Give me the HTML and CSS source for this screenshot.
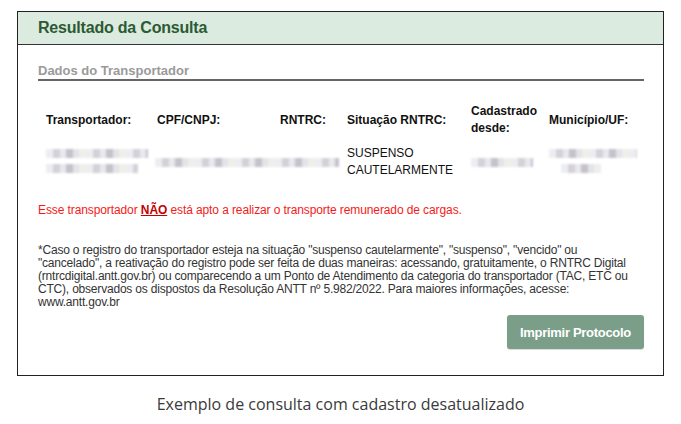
FILE: index.html
```html
<!DOCTYPE html>
<html lang="pt-BR">
<head>
    <meta charset="UTF-8">
    <title>Resultado da Consulta</title>
    <link rel="stylesheet" href="styles.css">
</head>
<body>
    <div class="figure">
        <div class="panel">
            <div class="panel-header">
                <h1>Resultado da Consulta</h1>
            </div>

            <div class="panel-body">
                <h2 class="section-title">Dados do Transportador</h2>

                <div class="data-table">
                    <div class="th">Transportador:</div>
                    <div class="th">CPF/CNPJ:</div>
                    <div class="th">RNTRC:</div>
                    <div class="th">Situação RNTRC:</div>
                    <div class="th">Cadastrado desde:</div>
                    <div class="th">Município/UF:</div>

                    <div class="td">
                        <span class="blur b1"></span>
                        <span class="blur b2"></span>
                    </div>
                    <div class="td span2">
                        <span class="blur b3"></span>
                    </div>
                    <div class="td">SUSPENSO CAUTELARMENTE</div>
                    <div class="td">
                        <span class="blur b4"></span>
                    </div>
                    <div class="td">
                        <span class="blur b5"></span>
                        <span class="blur b6"></span>
                    </div>
                </div>

                <p class="warning">Esse transportador <strong>NÃO</strong> está apto a realizar o transporte remunerado de cargas.</p>

                <p class="note">*Caso o registro do transportador esteja na situação "suspenso cautelarmente", "suspenso", "vencido" ou "cancelado", a reativação do registro pode ser feita de duas maneiras: acessando, gratuitamente, o RNTRC Digital (rntrcdigital.antt.gov.br) ou comparecendo a um Ponto de Atendimento da categoria do transportador (TAC, ETC ou CTC), observados os dispostos da Resolução ANTT nº 5.982/2022. Para maiores informações, acesse: www.antt.gov.br</p>

                <div class="actions">
                    <button class="print-button">Imprimir Protocolo</button>
                </div>
            </div>
        </div>

        <p class="caption">Exemplo de consulta com cadastro desatualizado</p>
    </div>
</body>
</html>
```

FILE: styles.css
```css
* {
    margin: 0;
    padding: 0;
    box-sizing: border-box;
}

body {
    font-family: 'Liberation Sans', Arial, sans-serif;
    background: white;
    color: #222;
}

.figure {
    padding: 11px 0 0 17px;
}

.panel {
    width: 647px;
    height: 365px;
    border: 1px solid #222;
    background: white;
}

.panel-header {
    height: 33px;
    background: #dcebe0;
    border-bottom: 1px solid #333;
    padding-left: 20px;
    display: flex;
    align-items: center;
}

.panel-header h1 {
    font-size: 16px;
    font-weight: bold;
    color: #2c5a32;
    letter-spacing: -0.2px;
}

.panel-body {
    padding: 18px 19px 0 20px;
}

.section-title {
    font-size: 13px;
    font-weight: bold;
    color: #9a9a9a;
    border-bottom: 2px solid #666;
    padding-bottom: 1px;
    line-height: 15px;
}

.data-table {
    display: grid;
    grid-template-columns: 111px 123px 67px 124px 78px 1fr;
    margin-top: 22px;
    font-size: 12px;
    line-height: 17px;
}

.th {
    font-weight: bold;
    color: #111;
    padding-left: 8px;
    align-self: center;
}

.td {
    padding: 8px 0 0 8px;
    color: #111;
    min-height: 46px;
}

.td.span2 {
    grid-column: span 2;
    padding-left: 6px;
}

.blur {
    display: block;
    height: 9px;
    margin: 4px 0 6px;
    filter: blur(0.8px);
    opacity: 0.75;
    background: repeating-linear-gradient(90deg, #e6e8ee 0 7px, #c7c3ca 7px 14px, #dfe2ea 14px 20px, #b3adb9 20px 27px, #d8dbe2 27px 33px, #ece9e4 33px 40px);
}

.b1 { width: 102px; }
.b2 { width: 92px; }
.b3 { width: 184px; margin-top: 13px; }
.b4 { width: 62px; margin-top: 13px; }
.b5 { width: 88px; }
.b6 { width: 40px; margin-left: 12px; }

.warning {
    margin-top: 20px;
    font-size: 12px;
    color: #f41a1a;
    line-height: 14px;
    letter-spacing: -0.1px;
}

.warning strong {
    color: #c40000;
    text-decoration: underline;
}

.note {
    margin-top: 27px;
    max-width: 602px;
    font-size: 12px;
    line-height: 13px;
    color: #333;
    letter-spacing: -0.2px;
}

.actions {
    display: flex;
    justify-content: flex-end;
    margin-top: 6px;
}

.print-button {
    width: 137px;
    height: 34px;
    background: #7a9e88;
    color: white;
    border: none;
    border-radius: 3px;
    font-family: 'Liberation Sans', Arial, sans-serif;
    font-size: 13px;
    font-weight: bold;
    letter-spacing: -0.3px;
    box-shadow: 0 1px 1px rgba(0, 0, 0, 0.15);
}

.caption {
    width: 647px;
    margin-top: 17px;
    text-align: center;
    font-family: 'Open Sans', sans-serif;
    font-size: 16px;
    color: #3a3a3a;
}
```
